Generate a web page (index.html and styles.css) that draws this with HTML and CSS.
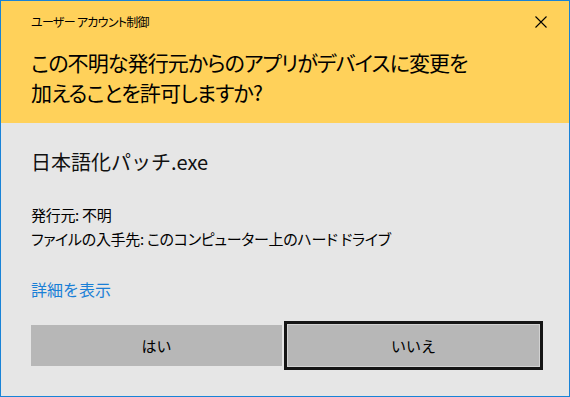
FILE: index.html
```html
<!DOCTYPE html>
<html lang="ja">
<head>
<meta charset="utf-8">
<title>ユーザー アカウント制御</title>
<link rel="stylesheet" href="styles.css">
</head>
<body>
<div class="window">
  <div class="header">
    <div class="title">ユーザー アカウント制御</div>
    <svg class="close" width="12" height="12" viewBox="0 0 12 12"><path d="M0.5 0.5 L11.5 11.5 M11.5 0.5 L0.5 11.5" stroke="#000" stroke-width="1.1" fill="none"/></svg>
    <div class="heading">この不明な発行元からのアプリがデバイスに変更を<br>加えることを許可しますか?</div>
  </div>
  <div class="body">
    <div class="filename">日本語化パッチ.exe</div>
    <div class="info">
      <div>発行元: 不明</div>
      <div>ファイルの入手先: このコンピューター上のハード ドライブ</div>
    </div>
    <div class="link">詳細を表示</div>
    <div class="buttons">
      <div class="btn">はい</div>
      <div class="btn focus">いいえ</div>
    </div>
  </div>
</div>
</body>
</html>
```

FILE: styles.css
```css
* { box-sizing: border-box; }
html, body { margin: 0; padding: 0; }
body {
  font-family: "Noto Sans CJK JP", "Noto Sans", sans-serif;
  color: #000;
  background: #e6e6e6;
}
.window {
  width: 570px;
  height: 397px;
  border: 1px solid #1883d7;
  background: #e6e6e6;
  display: flex;
  flex-direction: column;
}
.header {
  position: relative;
  background: #ffd15a;
  height: 122px;
  padding: 13px 30px 0 30px;
}
.title {
  font-size: 12px;
  line-height: 16px;
  letter-spacing: -0.7px;
  font-feature-settings: "palt";
}
.close {
  position: absolute;
  top: 15px;
  right: 22px;
}
.heading {
  margin-top: 17px;
  font-size: 21px;
  line-height: 30px;
  letter-spacing: -0.9px;
  font-feature-settings: "palt";
}
.body {
  padding: 25px 30px 0 30px;
}
.filename {
  font-size: 20px;
  line-height: 28px;
  color: #111;
}
.info {
  margin-top: 27px;
  font-size: 15px;
  line-height: 24px;
  letter-spacing: -0.3px;
  font-feature-settings: "palt";
}
.link {
  margin-top: 26px;
  font-size: 16px;
  line-height: 24px;
  color: #1a7fd6;
}
.buttons {
  margin-top: 24px;
  display: grid;
  grid-template-columns: 1fr 1fr;
  gap: 6px;
}
.btn {
  height: 41px;
  background: #b7b7b7;
  display: flex;
  align-items: center;
  justify-content: center;
  font-size: 15px;
}
.btn.focus {
  box-shadow: 0 0 0 1px #d2d2d2, 0 0 0 4px #151515;
}
```
